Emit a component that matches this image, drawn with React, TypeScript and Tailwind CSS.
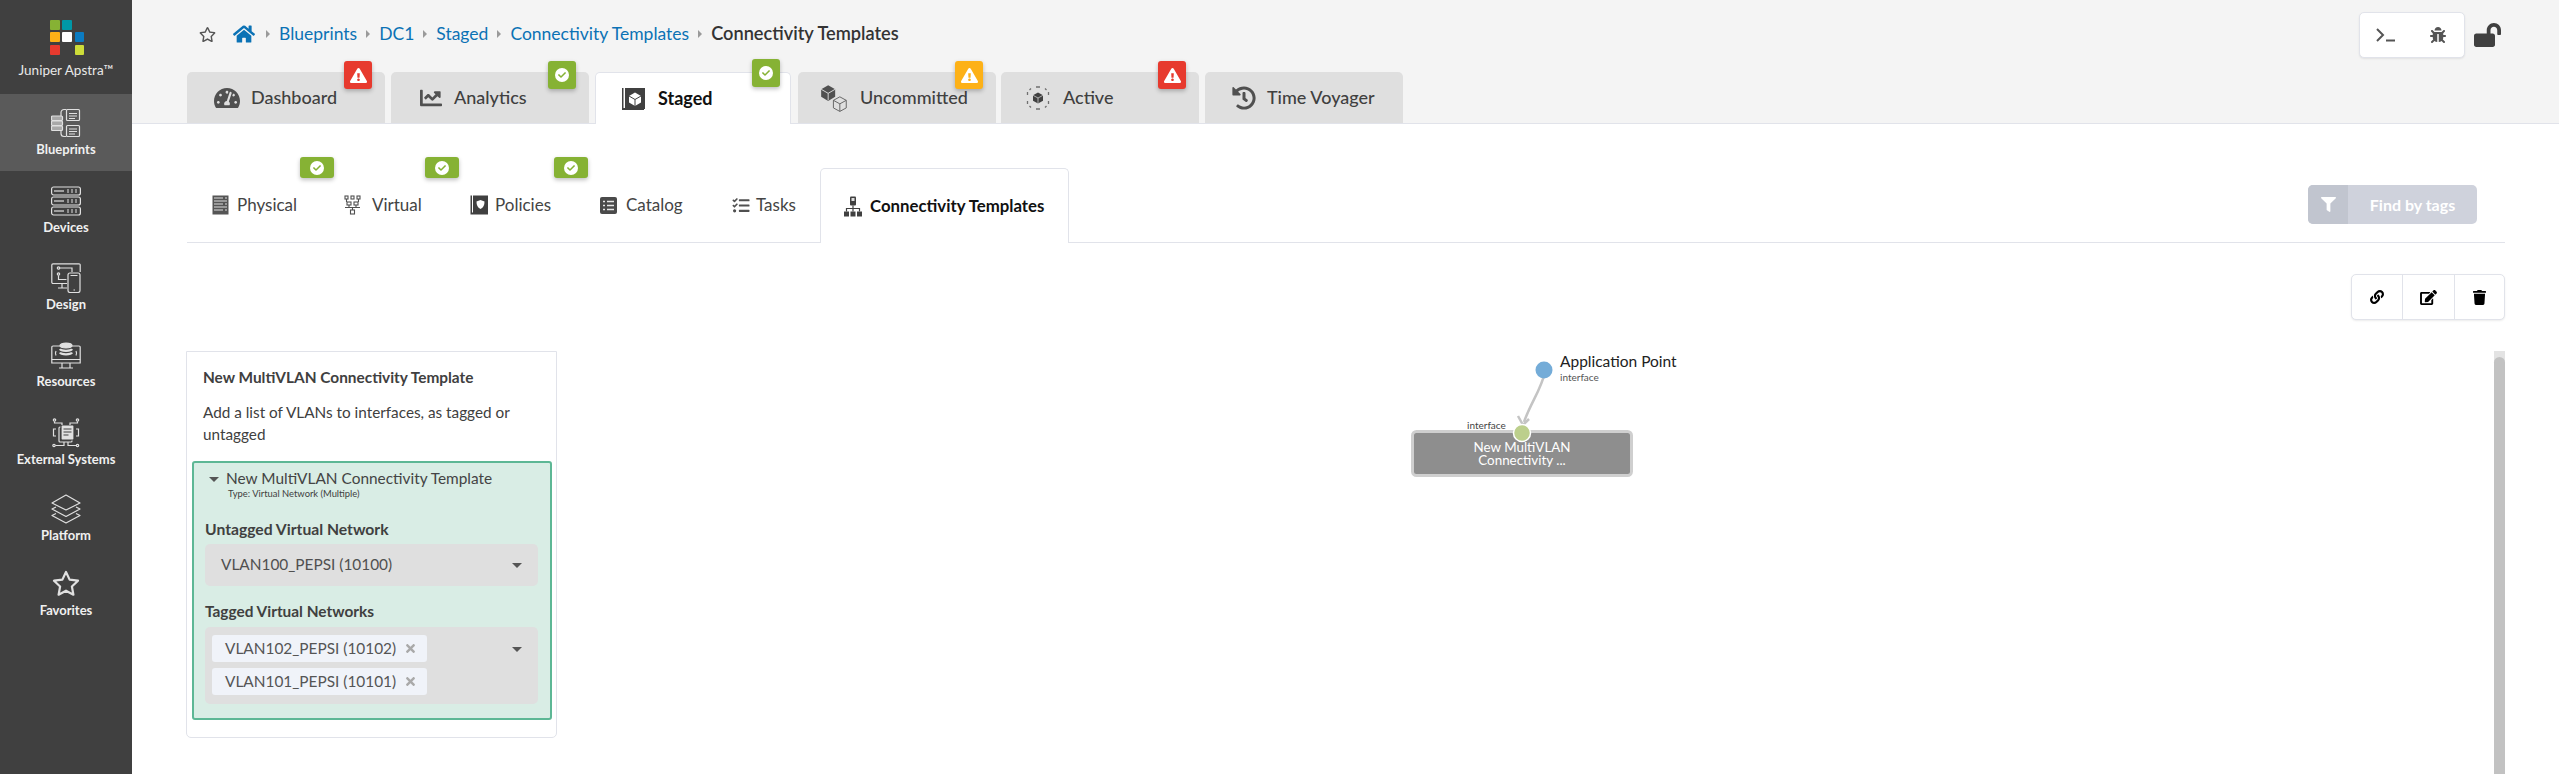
import React from "react";
import {
  FaBug,
  FaChartLine,
  FaCheck,
  FaEdit,
  FaExclamationTriangle,
  FaFilter,
  FaHistory,
  FaHome,
  FaLink,
  FaLockOpen,
  FaRegStar,
  FaTachometerAlt,
  FaTasks,
  FaTimes,
  FaTrash,
} from "react-icons/fa";

const Logo = () => (
  <svg width="34" height="35" viewBox="0 0 34 35">
    <rect x="0" y="0" width="10" height="10" rx="1" fill="#86b234" />
    <rect x="12" y="0" width="10" height="10" rx="1" fill="#0097a7" />
    <rect x="0" y="12" width="10" height="10" rx="1" fill="#fdb117" />
    <rect x="12" y="12" width="10" height="10" rx="1" fill="#ffffff" />
    <rect x="25" y="12" width="9" height="10" rx="1" fill="#0b7bc1" />
    <rect x="0" y="25" width="10" height="10" rx="1" fill="#e73a2e" />
    <rect x="25" y="25" width="9" height="10" rx="1" fill="#cddc39" />
  </svg>
);

const BlueprintsIcon = () => (
  <svg width="30" height="30" viewBox="0 0 30 30" fill="none" stroke="#e0e0e0" strokeWidth="1.2">
    <path d="M15 1.5h-2a3 3 0 0 0-3 3v3.500M15 28.500h-2a3 3 0 0 1-3-3v-3" />
    <rect x="15.500" y="1.500" width="13" height="11" rx="1" />
    <path d="M18 5.500h8M18 8h8M18 10.500h6" />
    <rect x="15.500" y="17.500" width="13" height="11" rx="1" />
    <path d="M18 21h8M18 23.500h8M18 26h6" />
    <rect x="0.500" y="8" width="11" height="4.500" rx="1" fill="#a8a8a8" />
    <rect x="0.500" y="13" width="11" height="4.500" rx="1" fill="#a8a8a8" />
    <rect x="0.500" y="18" width="11" height="4.500" rx="1" fill="#a8a8a8" />
  </svg>
);

const DevicesIcon = () => (
  <svg width="30" height="30" viewBox="0 0 30 30" fill="none" stroke="#e0e0e0" strokeWidth="1.2">
    {[1, 11, 21].map((y) => (
      <g key={y}>
        <rect x="0.600" y={y} width="28.800" height="8" rx="2" />
        <path d={`M3 ${y + 4}h10`} />
        <path d={`M16 ${y + 3}h2M20 ${y + 3}h2M24 ${y + 3}h2M16 ${y + 5}h2M20 ${y + 5}h2M24 ${y + 5}h2`} />
      </g>
    ))}
  </svg>
);

const DesignIcon = () => (
  <svg width="30" height="30" viewBox="0 0 30 30" fill="none" stroke="#e0e0e0" strokeWidth="1.2">
    <path d="M16 20.500H2a1.200 1.200 0 0 1-1.200-1.200V2A1.200 1.200 0 0 1 2 .8h26A1.200 1.200 0 0 1 29.200 2v7" />
    <path d="M7 25h9M11 20.500V25" />
    <rect x="17" y="10" width="12" height="19.500" rx="2" />
    <path d="M19.500 12.500h7M22.500 27h1.500" />
    <circle cx="7.500" cy="5" r="1.200" />
    <circle cx="7.500" cy="11" r="1.200" />
    <path d="M9 5h12v4M7.500 12.500v4h8" />
  </svg>
);

const ResourcesIcon = () => (
  <svg width="30" height="28" viewBox="0 0 30 28" fill="none" stroke="#e0e0e0" strokeWidth="1.2">
    <path d="M9 4H2a1.200 1.200 0 0 0-1.200 1.200V21h28.400V5.200A1.200 1.200 0 0 0 28 4h-7" />
    <path d="M.8 17.500h28.400M11 21v4.500M19 21v4.500M8 26h14" />
    <ellipse cx="15" cy="3.500" rx="6" ry="2.400" fill="#e0e0e0" />
    <path d="M9 7c1 2.400 11 2.400 12 0M9 10.500c1 2.400 11 2.400 12 0" strokeWidth="2.200" />
    <path d="M5 9c-.8 1.500-.8 3 0 4.500M25 9c.8 1.500.8 3 0 4.500" />
  </svg>
);

const ExternalIcon = () => (
  <svg width="30" height="30" viewBox="0 0 30 30" fill="none" stroke="#e0e0e0" strokeWidth="1.2">
    <rect x="8" y="9" width="13" height="15" rx="1" />
    <rect x="10" y="7" width="13" height="15" rx="1" fill="#e0e0e0" stroke="#404040" />
    <path d="M12.500 11h8M12.500 14h8M12.500 17h5" stroke="#404040" />
    <circle cx="3.500" cy="2" r="1.200" />
    <circle cx="26.500" cy="2" r="1.200" />
    <circle cx="3" cy="27.500" r="1.200" />
    <circle cx="26.500" cy="27.500" r="1.200" />
    <path d="M3.500 3.500v1.500h7.500v2M26.500 3.500v1.500h-7.500v2M4.500 27.500h8.500v-3.500M25 27.500h-8v-3.500" />
    <path d="M5 11H2.500v7H5M25 11h2.500v7H25" />
  </svg>
);

const PlatformIcon = () => (
  <svg width="30" height="30" viewBox="0 0 30 30" fill="none" stroke="#e0e0e0" strokeWidth="1.2" strokeLinejoin="round">
    <path d="M15 1 29 9 15 16 1 9Z" />
    <path d="M5 13 1 15l14 7.500L29 15l-4-2" />
    <path d="M5 19.500 1 21.500l14 7.500 14-7.500-4-2" />
  </svg>
);

const StarIcon = () => (
  <svg width="28" height="26" viewBox="0 0 28 26" fill="none" stroke="#e0e0e0" strokeWidth="2.200" strokeLinejoin="round">
    <path d="M14 2 17.600 9.600 26 10.700 19.900 16.500 21.400 24.700 14 20.700 6.600 24.700 8.100 16.500 2 10.700 10.400 9.600Z" />
  </svg>
);

const navItems = [
  { label: "Blueprints", icon: <BlueprintsIcon />, height: "h-[77px]", gap: "gap-[3px]", active: true },
  { label: "Devices", icon: <DevicesIcon />, height: "h-[78px]", gap: "gap-[3px]" },
  { label: "Design", icon: <DesignIcon />, height: "h-[77px]", gap: "gap-[3px]" },
  { label: "Resources", icon: <ResourcesIcon />, height: "h-[78px]", gap: "gap-[3px]" },
  { label: "External Systems", icon: <ExternalIcon />, height: "h-[76px]", gap: "gap-[3px]" },
  { label: "Platform", icon: <PlatformIcon />, height: "h-[76px]", gap: "gap-[3px]" },
  { label: "Favorites", icon: <StarIcon />, height: "h-[76px]", gap: "gap-[6px]" },
];

const Sidebar = () => (
  <aside className="w-[132px] shrink-0 bg-[#404040] h-[774px] flex flex-col">
    <div className="h-[94px] flex flex-col items-center pt-[20px]">
      <span className="ml-[2px] flex">
        <Logo />
      </span>
      <span className="mt-[7px] text-[13.500px] leading-[16px] text-[#e8e8e8]">Juniper Apstra™</span>
    </div>
    {navItems.map((item) => (
      <div
        key={item.label}
        className={`${item.height} ${item.gap} flex flex-col items-center justify-center ${item.active ? "bg-[#5a5a5a]" : ""}`}
      >
        {item.icon}
        <span className="text-[13px] leading-[16px] font-bold text-[#f0f0f0] whitespace-nowrap">{item.label}</span>
      </div>
    ))}
  </aside>
);

const Badge = ({ color, kind, className }: { color: string; kind: "warn" | "ok"; className: string }) => (
  <span
    className={`absolute z-10 flex items-center justify-center rounded-[3px] shadow-[0_2px_4px_rgba(0,0,0,0.25)] ${color} ${className}`}
  >
    {kind === "warn" ? (
      <FaExclamationTriangle className="w-[17px] h-[17px] text-white" />
    ) : (
      <span className="w-[14px] h-[14px] rounded-full bg-white flex items-center justify-center">
        <FaCheck className="w-[8px] h-[8px] text-[#86b234]" />
      </span>
    )}
  </span>
);

const StagedIcon = () => (
  <svg width="24" height="24" viewBox="0 0 24 24">
    <path d="M1 1h1.500v20H23v2H1Z" fill="#404040" />
    <rect x="4" y="1" width="20" height="21" fill="#404040" />
    <path d="M14 5.500 20 9v6.500L14 19l-6-3.500V9Z" fill="#fff" />
    <path d="M8 9l6 3.500L20 9M14 12.500V19" stroke="#404040" fill="none" />
  </svg>
);

const UncommittedIcon = () => (
  <svg width="28" height="28" viewBox="0 0 24 24">
    <path d="M7 1 13 4.500V11L7 14.500 1 11V4.500Z" fill="#505050" />
    <path d="M1 4.500 7 8l6-3.500M7 8v6" stroke="#dfdfdf" fill="none" strokeWidth="0.8" />
    <path d="M17 11 22.500 14v6.500L17 23.500l-5.500-3V14ZM11.500 14l5.500 3 5.500-3M17 17v6.500" stroke="#606060" fill="none" strokeWidth="0.8" />
  </svg>
);

const ActiveIcon = () => (
  <svg width="24" height="24" viewBox="0 0 24 24">
    <path d="M12 6.500 17 9.300v5.400L12 17.500l-5-2.800V9.300Z" fill="#404040" />
    <path d="M7 9.300 12 12l5-2.700M12 12v5.500" stroke="#dfdfdf" fill="none" strokeWidth="0.7" />
    <path
      d="M10 1h4M10 23h4M1.500 6v3M1.500 15v3M22.500 6v3M22.500 15v3M5 2.500 3.500 4M19 2.500 20.500 4M5 21.500 3.500 20M19 21.500 20.500 20"
      stroke="#707070"
      strokeWidth="1.300"
      fill="none"
    />
  </svg>
);

const mainTabs = [
  { label: "Dashboard", icon: <FaTachometerAlt className="w-[26px] h-[24px]" />, width: "w-[198px]", pad: "pl-[27px]", gap: "gap-[11px]", gapAfter: "mr-[6px]" },
  { label: "Analytics", icon: <FaChartLine className="w-[24px] h-[22px]" />, width: "w-[198px]", pad: "pl-[28px]", gap: "gap-[11px]", gapAfter: "mr-[6px]" },
  { label: "Staged", icon: <StagedIcon />, width: "w-[196px]", pad: "pl-[25px]", gap: "gap-[13px]", gapAfter: "mr-[7px]", active: true },
  { label: "Uncommitted", icon: <UncommittedIcon />, width: "w-[198px]", pad: "pl-[22px]", gap: "gap-[12px]", gapAfter: "mr-[5px]" },
  { label: "Active", icon: <ActiveIcon />, width: "w-[198px]", pad: "pl-[25px]", gap: "gap-[13px]", gapAfter: "mr-[6px]" },
  { label: "Time Voyager", icon: <FaHistory className="w-[24px] h-[24px]" />, width: "w-[198px]", pad: "pl-[27px]", gap: "gap-[11px]", gapAfter: "" },
];

const crumbs = ["Blueprints", "DC1", "Staged", "Connectivity Templates"];

const Caret = () => <span className="w-0 h-0 border-y-[4px] border-y-transparent border-l-[4px] border-l-[#9a9a9a] mx-[9px]" />;

const Header = () => (
  <header className="relative h-[124px] bg-[#f4f4f4] border-b border-[#e1e3ea] pl-[55px] pr-[58px] flex flex-col">
    <div className="h-[72px] flex items-start justify-between">
      <div className="flex items-center mt-[23px] h-[22px] text-[17.500px] whitespace-nowrap">
        <FaRegStar className="w-[17px] h-[17px] text-[#555555] ml-[12px] mr-[17px]" />
        <FaHome className="w-[22px] h-[20px] text-[#0b72b5]" />
        <span className="w-[2px]" />
        {crumbs.map((c) => (
          <React.Fragment key={c}>
            <Caret />
            <span className="text-[#0b72b5]">{c}</span>
          </React.Fragment>
        ))}
        <Caret />
        <span className="text-[#333333] text-[18.200px] font-semibold">Connectivity Templates</span>
      </div>
      <div className="flex items-center mt-[12px]">
        <div className="w-[106px] h-[46px] bg-white rounded-[5px] border border-[#e1e3ea] shadow-[0_1px_2px_rgba(0,0,0,0.08)] flex items-center text-[#555555]">
          <span className="w-[54px] flex justify-center">
            <svg width="20" height="14" viewBox="0 0 20 14" fill="none" stroke="#555555" strokeWidth="2">
              <path d="M1 1l6 6-6 6M10 12.500h9" />
            </svg>
          </span>
          <span className="w-[52px] flex justify-center">
            <FaBug className="w-[16px] h-[16px]" />
          </span>
        </div>
        <FaLockOpen className="w-[27px] h-[24px] text-[#404040] ml-[9px]" />
      </div>
    </div>
    <div className="flex h-[51px]">
      {mainTabs.map((t) => (
        <div
          key={t.label}
          className={`${t.width} ${t.gapAfter} ${t.pad} ${t.gap} relative flex items-center rounded-t-[5px] text-[18px] ${
            t.active
              ? "bg-white border-x border-t border-[#e1e3ea] h-[52px] text-[#111111] font-bold"
              : "bg-[#dfdfdf] text-[#404040] font-medium"
          }`}
        >
          <span className="flex text-[#505050]">{t.icon}</span>
          <span>{t.label}</span>
        </div>
      ))}
    </div>
    <Badge color="bg-[#e73a2e]" kind="warn" className="left-[212px] top-[61px] w-[28px] h-[28px]" />
    <Badge color="bg-[#86b234]" kind="ok" className="left-[416px] top-[61px] w-[28px] h-[28px]" />
    <Badge color="bg-[#86b234]" kind="ok" className="left-[620px] top-[59px] w-[28px] h-[28px]" />
    <Badge color="bg-[#fdb117]" kind="warn" className="left-[823px] top-[61px] w-[28px] h-[28px]" />
    <Badge color="bg-[#e73a2e]" kind="warn" className="left-[1026px] top-[61px] w-[28px] h-[28px]" />
  </header>
);

const PhysicalIcon = () => (
  <svg width="17" height="20" viewBox="0 0 17 20">
    <rect x="0.500" y="0.500" width="16" height="19" fill="#555555" />
    <path d="M2 3h9M2 6h13M2 9h9M2 12h13M2 15h9M13 3h2M13 9h2M13 15h2" stroke="#dddddd" strokeWidth="1.200" />
  </svg>
);

const VirtualIcon = () => (
  <svg width="17" height="20" viewBox="0 0 17 20" fill="none" stroke="#505050" strokeWidth="1.100">
    <rect x="1" y="1" width="3" height="3" />
    <rect x="7" y="1" width="3" height="3" />
    <rect x="13" y="1" width="3" height="3" />
    <rect x="3" y="7" width="4" height="3" />
    <rect x="10" y="7" width="4" height="3" />
    <rect x="6.500" y="15" width="4" height="4" />
    <path d="M1 12.500h15M8.500 12.500V15M5 10v2.500M12 10v2.500M2.500 4v3M14.500 4v3" />
  </svg>
);

const PoliciesIcon = () => (
  <svg width="18" height="20" viewBox="0 0 18 20">
    <path d="M0.500 0.500h1.500v17H18v2H0.500Z" fill="#404040" />
    <rect x="3" y="0.500" width="15" height="18" fill="#404040" />
    <path d="M10.500 5 14.500 6.500c0 3.500-1 6-4 7.500-3-1.500-4-4-4-7.500Z" fill="#fff" />
  </svg>
);

const CatalogIcon = () => (
  <svg width="17" height="17" viewBox="0 0 17 17">
    <rect x="0" y="0" width="17" height="17" rx="2" fill="#4a4a4a" />
    <path d="M3 4.500h2M7 4.500h7M3 8.500h2M7 8.500h7M3 12.500h2M7 12.500h7" stroke="#e8e8e8" strokeWidth="1.600" />
  </svg>
);

const TemplatesIcon = () => (
  <svg width="18" height="21" viewBox="0 0 18 21">
    <rect x="6" y="0.500" width="6" height="9" rx="1" fill="#404040" />
    <rect x="7.500" y="2" width="3" height="3" fill="#dddddd" />
    <path d="M9 9.500v3M2.500 15.500v-3h13v3M9 12.500v3" stroke="#404040" fill="none" strokeWidth="1.200" />
    <rect x="0" y="15.500" width="5" height="5" fill="#404040" />
    <rect x="6.500" y="15.500" width="5" height="5" fill="#404040" />
    <rect x="13" y="15.500" width="5" height="5" fill="#404040" />
  </svg>
);

const subTabs = [
  { label: "Physical", icon: <PhysicalIcon />, width: "w-[140px]", gap: "gap-[8px]", pad: "pl-[25px]" },
  { label: "Virtual", icon: <VirtualIcon />, width: "w-[118px]", gap: "gap-[11px]", pad: "pl-[17px]" },
  { label: "Policies", icon: <PoliciesIcon />, width: "w-[129px]", gap: "gap-[7px]", pad: "pl-[25px]" },
  { label: "Catalog", icon: <CatalogIcon />, width: "w-[134px]", gap: "gap-[9px]", pad: "pl-[26px]" },
  { label: "Tasks", icon: <FaTasks className="w-[18px] h-[17px]" />, width: "w-[112px]", gap: "gap-[6px]", pad: "pl-[24px]" },
];

const SubTabs = () => (
  <div className="relative mx-[55px] mt-[44px] w-[2318px] h-[75px] border-b border-[#e1e3ea] flex items-start">
    <div className="flex h-[74px]">
      {subTabs.map((t) => (
        <div key={t.label} className={`${t.width} ${t.gap} ${t.pad} flex items-center text-[17px] text-[#444444]`}>
          <span className="flex text-[#505050]">{t.icon}</span>
          <span>{t.label}</span>
        </div>
      ))}
      <div className="relative w-[249px] h-[75px] bg-white border-x border-t border-[#e1e3ea] rounded-t-[5px] pl-[23px] gap-[8px] flex items-center text-[16.800px] font-bold text-[#111111]">
        <TemplatesIcon />
        <span>Connectivity Templates</span>
      </div>
    </div>
    <div className="ml-auto mr-[28px] mt-[17px] w-[169px] h-[39px] rounded-[5px] bg-[#cfd2dc] flex overflow-hidden">
      <span className="w-[40px] bg-[#c1c5cf] flex items-center justify-center">
        <FaFilter className="w-[15px] h-[15px] text-white" />
      </span>
      <span className="flex-1 flex items-center justify-center text-[16px] font-bold text-white">Find by tags</span>
    </div>
    <Badge color="bg-[#86b234]" kind="ok" className="left-[113px] top-[-11px] w-[34px] h-[21px]" />
    <Badge color="bg-[#86b234]" kind="ok" className="left-[238px] top-[-11px] w-[34px] h-[21px]" />
    <Badge color="bg-[#86b234]" kind="ok" className="left-[367px] top-[-11px] w-[34px] h-[21px]" />
  </div>
);

const ActionBar = () => (
  <div className="flex justify-end pr-[54px] mt-[31px]">
    <div className="w-[154px] h-[46px] bg-white rounded-[5px] border border-[#e1e3ea] shadow-[0_1px_2px_rgba(0,0,0,0.08)] flex divide-x divide-[#e1e3ea] text-black">
      <span className="w-[51px] flex items-center justify-center">
        <FaLink className="w-[14px] h-[14px]" />
      </span>
      <span className="w-[52px] flex items-center justify-center">
        <FaEdit className="w-[17px] h-[15px]" />
      </span>
      <span className="flex-1 flex items-center justify-center">
        <FaTrash className="w-[13px] h-[15px]" />
      </span>
    </div>
  </div>
);

const SelectCaret = () => <span className="w-0 h-0 border-x-[5px] border-x-transparent border-t-[5px] border-t-[#555555]" />;

const Tag = ({ label }: { label: string }) => (
  <span className="w-[215px] h-[27px] rounded-[3px] bg-[#f0f3f9] text-[#555555] text-[15.400px] pl-[13px] flex items-center gap-[8px] whitespace-nowrap">
    {label}
    <FaTimes className="w-[13px] h-[13px] text-[#a9a9a9]" />
  </span>
);

const TemplatePanel = () => (
  <section className="w-[371px] h-[387px] shrink-0 rounded-b-[5px] border border-[#e1e3ea] bg-white px-[5px] text-[#404040]">
    <h2 className="text-[15.400px] leading-[18px] font-bold ml-[11px] mt-[16px] whitespace-nowrap">New MultiVLAN Connectivity Template</h2>
    <p className="text-[15.300px] leading-[22px] ml-[11px] mt-[15px] w-[340px]">
      Add a list of VLANs to interfaces, as tagged or untagged
    </p>
    <div className="mt-[16px] h-[259px] w-[360px] rounded-[3px] border-2 border-[#5db795] bg-[#d9ede5] px-[11px]">
      <div className="flex items-center pl-[4px] mt-[7px] h-[18px]">
        <SelectCaret />
        <span className="ml-[7px] text-[15.400px] text-[#444444] whitespace-nowrap">New MultiVLAN Connectivity Template</span>
      </div>
      <div className="ml-[23px] text-[9.400px] leading-[12px] text-[#404040]">Type: Virtual Network (Multiple)</div>
      <div className="mt-[20px] text-[15.700px] leading-[18px] font-bold text-[#404040] whitespace-nowrap">Untagged Virtual Network</div>
      <div className="mt-[6px] w-[333px] h-[42px] rounded-[5px] bg-[#dfdfdf] flex items-center justify-between pl-[16px] pr-[16px] text-[15.400px] text-[#505050]">
        <span>VLAN100_PEPSI (10100)</span>
        <SelectCaret />
      </div>
      <div className="mt-[16px] text-[15.400px] leading-[18px] font-bold text-[#404040] whitespace-nowrap">Tagged Virtual Networks</div>
      <div className="mt-[7px] relative w-[333px] h-[77px] rounded-[5px] bg-[#dfdfdf] pl-[7px] pt-[8px] flex flex-col gap-[6px]">
        <Tag label="VLAN102_PEPSI (10102)" />
        <Tag label="VLAN101_PEPSI (10101)" />
        <span className="absolute right-[16px] top-[20px] flex">
          <SelectCaret />
        </span>
      </div>
    </div>
  </section>
);

const Graph = () => (
  <svg width="300" height="170" viewBox="0 0 300 170" className="mt-[-11px] ml-[854px] shrink-0">
    <path d="M134 32C130 50 120 62 113 82" fill="none" stroke="#c4c4c4" strokeWidth="2.500" />
    <path d="M107 76 112 85 118 79" fill="none" stroke="#c4c4c4" strokeWidth="2.500" />
    <rect x="1.500" y="91.500" width="219" height="44" rx="4" fill="#8e8e8e" stroke="#cfcfcf" strokeWidth="3" />
    <circle cx="133" cy="30" r="8.500" fill="#74acd8" />
    <circle cx="111" cy="93" r="8.500" fill="#bccf8c" stroke="#ffffff" strokeWidth="1.500" />
    <text x="149" y="27" fontSize="15.500" fill="#222222">Application Point</text>
    <text x="149" y="41" fontSize="10" fill="#555555">interface</text>
    <text x="56" y="89" fontSize="10" fill="#444444">interface</text>
    <text x="111" y="112" fontSize="13.400" fill="#ffffff" textAnchor="middle">New MultiVLAN</text>
    <text x="111" y="125" fontSize="13.400" fill="#ffffff" textAnchor="middle">Connectivity ...</text>
  </svg>
);

export default function App() {
  return (
    <div className="w-[2559px] h-[774px] overflow-hidden flex bg-white font-['Lato','Open_Sans',sans-serif]">
      <Sidebar />
      <main className="flex-1 min-w-0 flex flex-col">
        <Header />
        <SubTabs />
        <ActionBar />
        <div className="relative flex items-start pl-[54px] mt-[31px]">
          <TemplatePanel />
          <Graph />
          <div className="absolute left-[2362px] top-0 w-[11px] h-[424px] bg-[#e3e3e3] pt-[6px]">
            <div className="h-full rounded-t-full bg-[#c2c2c2]" />
          </div>
        </div>
      </main>
    </div>
  );
}
